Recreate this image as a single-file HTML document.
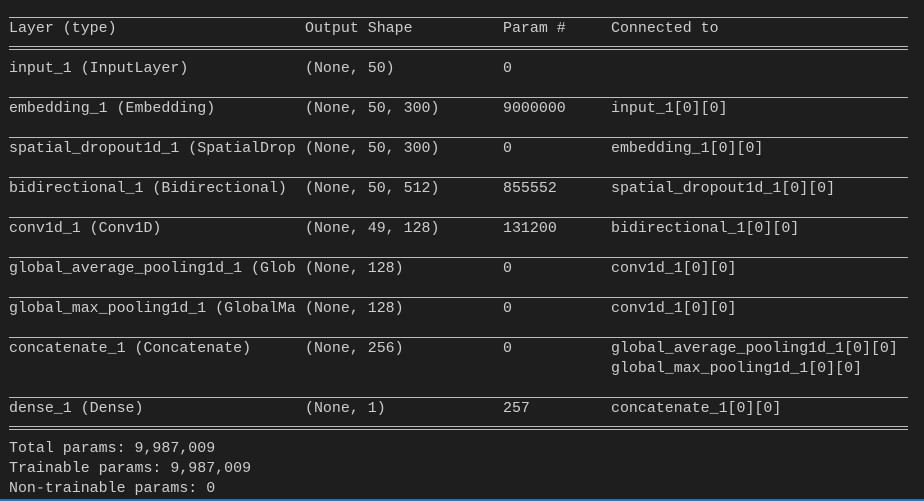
<!DOCTYPE html>
<html><head><style>
html,body{margin:0;padding:0;background:#1e1e1e;width:924px;height:501px;overflow:hidden}
body{position:relative;font-family:"Liberation Mono",monospace;font-size:14.95px;color:#cccccc}
.t{position:absolute;white-space:pre;line-height:20px;height:20px;top:1px}
.l{position:absolute;left:9px;width:899px;height:1px;background:#bdbdbd}
.d{position:absolute;left:9px;width:899px;height:4px;border-top:1px solid #bdbdbd;border-bottom:1px solid #bdbdbd;box-sizing:border-box}
.blue{position:absolute;left:0;bottom:0;width:924px;height:2px;background:#0a7acc}
.r{position:absolute;left:0;width:924px;height:20px}
</style></head><body>
<div class="l" style="top:17px"></div>
<div class="r" style="top:18px"><div class="t" style="left:9px">Layer (type)</div><div class="t" style="left:305px">Output Shape</div><div class="t" style="left:503px">Param #</div><div class="t" style="left:611px">Connected to</div></div>
<div class="d" style="top:46px"></div>

<div class="r" style="top:58px"><div class="t" style="left:9px">input_1 (InputLayer)</div><div class="t" style="left:305px">(None, 50)</div><div class="t" style="left:503px">0</div></div>
<div class="l" style="top:97px"></div>

<div class="r" style="top:98px"><div class="t" style="left:9px">embedding_1 (Embedding)</div><div class="t" style="left:305px">(None, 50, 300)</div><div class="t" style="left:503px">9000000</div><div class="t" style="left:611px">input_1[0][0]</div></div>
<div class="l" style="top:137px"></div>

<div class="r" style="top:138px"><div class="t" style="left:9px">spatial_dropout1d_1 (SpatialDrop</div><div class="t" style="left:305px">(None, 50, 300)</div><div class="t" style="left:503px">0</div><div class="t" style="left:611px">embedding_1[0][0]</div></div>
<div class="l" style="top:177px"></div>

<div class="r" style="top:178px"><div class="t" style="left:9px">bidirectional_1 (Bidirectional)</div><div class="t" style="left:305px">(None, 50, 512)</div><div class="t" style="left:503px">855552</div><div class="t" style="left:611px">spatial_dropout1d_1[0][0]</div></div>
<div class="l" style="top:217px"></div>

<div class="r" style="top:218px"><div class="t" style="left:9px">conv1d_1 (Conv1D)</div><div class="t" style="left:305px">(None, 49, 128)</div><div class="t" style="left:503px">131200</div><div class="t" style="left:611px">bidirectional_1[0][0]</div></div>
<div class="l" style="top:257px"></div>

<div class="r" style="top:258px"><div class="t" style="left:9px">global_average_pooling1d_1 (Glob</div><div class="t" style="left:305px">(None, 128)</div><div class="t" style="left:503px">0</div><div class="t" style="left:611px">conv1d_1[0][0]</div></div>
<div class="l" style="top:297px"></div>

<div class="r" style="top:298px"><div class="t" style="left:9px">global_max_pooling1d_1 (GlobalMa</div><div class="t" style="left:305px">(None, 128)</div><div class="t" style="left:503px">0</div><div class="t" style="left:611px">conv1d_1[0][0]</div></div>
<div class="l" style="top:337px"></div>

<div class="r" style="top:338px"><div class="t" style="left:9px">concatenate_1 (Concatenate)</div><div class="t" style="left:305px">(None, 256)</div><div class="t" style="left:503px">0</div><div class="t" style="left:611px">global_average_pooling1d_1[0][0]</div></div>
<div class="r" style="top:358px"><div class="t" style="left:611px">global_max_pooling1d_1[0][0]</div></div>
<div class="l" style="top:397px"></div>

<div class="r" style="top:398px"><div class="t" style="left:9px">dense_1 (Dense)</div><div class="t" style="left:305px">(None, 1)</div><div class="t" style="left:503px">257</div><div class="t" style="left:611px">concatenate_1[0][0]</div></div>
<div class="d" style="top:426px"></div>

<div class="r" style="top:438px"><div class="t" style="left:9px">Total params: 9,987,009</div></div>
<div class="r" style="top:458px"><div class="t" style="left:9px">Trainable params: 9,987,009</div></div>
<div class="r" style="top:478px"><div class="t" style="left:9px">Non-trainable params: 0</div></div>
<div class="blue"></div>
</body></html>
